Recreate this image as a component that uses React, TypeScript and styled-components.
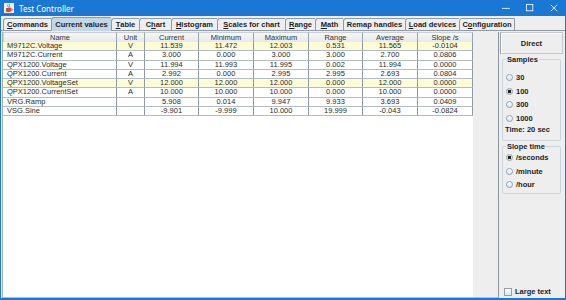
import React from "react";
import styled, { createGlobalStyle } from "styled-components";

const GlobalStyle = createGlobalStyle`
  html, body {
    margin: 0;
    padding: 0;
    background: #ffffff;
  }
  * {
    box-sizing: border-box;
  }
`;

type Tab = { label: string; mn?: number; width: number };

const tabs: Tab[] = [
  { label: "Commands", mn: 0, width: 48 },
  { label: "Current values", width: 60 },
  { label: "Table", mn: 0, width: 28 },
  { label: "Chart", mn: 1, width: 32 },
  { label: "Histogram", mn: 0, width: 46 },
  { label: "Scales for chart", mn: 0, width: 68 },
  { label: "Range", mn: 0, width: 30 },
  { label: "Math", mn: 0, width: 28 },
  { label: "Remap handles", width: 62 },
  { label: "Load devices", mn: 0, width: 54 },
  { label: "Configuration", mn: 1, width: 56 },
];

const columns = [
  { title: "Name", width: 114 },
  { title: "Unit", width: 28 },
  { title: "Current", width: 54 },
  { title: "Minimum", width: 55 },
  { title: "Maximum", width: 55 },
  { title: "Range", width: 54 },
  { title: "Average", width: 55 },
  { title: "Slope /s", width: 55 },
];

const gridCols = columns.map((c) => `${c.width}px`).join(" ");

type Row = { cells: string[]; hl?: boolean };

const rows: Row[] = [
  { cells: ["M9712C.Voltage", "V", "11.539", "11.472", "12.003", "0.531", "11.565", "-0.0104"], hl: true },
  { cells: ["M9712C.Current", "A", "3.000", "0.000", "3.000", "3.000", "2.700", "0.0806"] },
  { cells: ["QPX1200.Voltage", "V", "11.994", "11.993", "11.995", "0.002", "11.994", "0.0000"] },
  { cells: ["QPX1200.Current", "A", "2.992", "0.000", "2.995", "2.995", "2.693", "0.0804"] },
  { cells: ["QPX1200.VoltageSet", "V", "12.000", "12.000", "12.000", "0.000", "12.000", "0.0000"], hl: true },
  { cells: ["QPX1200.CurrentSet", "A", "10.000", "10.000", "10.000", "0.000", "10.000", "0.0000"] },
  { cells: ["VRG.Ramp", "", "5.908", "0.014", "9.947", "9.933", "3.693", "0.0409"] },
  { cells: ["VSG.Sine", "", "-9.901", "-9.999", "10.000", "19.999", "-0.043", "-0.0824"] },
];

const App: React.FC = () => {
  return (
    <>
      <GlobalStyle />
      <Window>
        <TitleBar>
          <TitleLeft>
            <svg width="10" height="10" viewBox="0 0 10 10">
              <rect x="0" y="0" width="10" height="10" fill="#e9eef5" />
              <path d="M2 5 h5 v3 a1 1 0 0 1 -1 1 h-3 a1 1 0 0 1 -1 -1 z" fill="#d24b2a" />
              <path d="M7 5.8 h1 a0.8 0.8 0 0 1 0 1.6 h-1" fill="none" stroke="#d24b2a" strokeWidth="0.7" />
              <path d="M4 1.5 q-1 1 0 2 q1 1 0 2" fill="none" stroke="#4a6fa8" strokeWidth="0.7" />
              <path d="M5.6 1.2 q-1 1 0 2 q1 1 0 2" fill="none" stroke="#4a6fa8" strokeWidth="0.7" />
            </svg>
            <TitleText>Test Controller</TitleText>
          </TitleLeft>
          <WinControls>
            <WinButton>
              <svg width="10" height="10" viewBox="0 0 10 10">
                <path d="M0 5.5 H10" stroke="#fff" strokeWidth="1" />
              </svg>
            </WinButton>
            <WinButton>
              <svg width="10" height="10" viewBox="0 0 10 10">
                <rect x="0.5" y="0.5" width="8" height="8" fill="none" stroke="#fff" strokeWidth="1" />
              </svg>
            </WinButton>
            <WinButton>
              <svg width="10" height="10" viewBox="0 0 10 10">
                <path d="M1 1 L9 9 M9 1 L1 9" stroke="#fff" strokeWidth="1" />
              </svg>
            </WinButton>
          </WinControls>
        </TitleBar>

        <TabStrip>
          {tabs.map((t, i) => (
            <TabButton key={t.label} $w={t.width} $active={i === 1}>
              {t.mn === undefined ? (
                t.label
              ) : (
                <>
                  {t.label.slice(0, t.mn)}
                  <u>{t.label[t.mn]}</u>
                  {t.label.slice(t.mn + 1)}
                </>
              )}
            </TabButton>
          ))}
        </TabStrip>

        <Content>
          <ScrollPane>
            <Viewport>
              <HeaderRow>
                {columns.map((c) => (
                  <HeaderCell key={c.title}>{c.title}</HeaderCell>
                ))}
              </HeaderRow>
              {rows.map((r) => (
                <DataRow key={r.cells[0]} $hl={r.hl}>
                  {r.cells.map((v, j) => (
                    <Cell key={j} $left={j === 0}>
                      {v}
                    </Cell>
                  ))}
                </DataRow>
              ))}
            </Viewport>
            <Filler />
          </ScrollPane>

          <SidePanel>
            <DirectButton>Direct</DirectButton>
            <Group $h={82} $pad={13}>
              <Legend>Samples</Legend>
              <RadioList>
                {["30", "100", "300", "1000"].map((s) => (
                  <RadioRow key={s}>
                    <Radio $on={s === "100"} />
                    {s}
                  </RadioRow>
                ))}
              </RadioList>
              <TimeText>Time: 20 sec</TimeText>
            </Group>
            <Group $h={48} $pad={6}>
              <Legend>Slope time</Legend>
              <RadioList>
                {["/seconds", "/minute", "/hour"].map((s) => (
                  <RadioRow key={s}>
                    <Radio $on={s === "/seconds"} />
                    {s}
                  </RadioRow>
                ))}
              </RadioList>
            </Group>
            <Spacer />
            <CheckRow>
              <CheckBox />
              Large text
            </CheckRow>
          </SidePanel>
        </Content>
      </Window>
    </>
  );
};

const Window = styled.div`
  width: 566px;
  height: 300px;
  display: flex;
  flex-direction: column;
  background: #eeeeee;
  border: 1px solid #1a78d4;
  border-top: none;
  border-bottom-width: 2px;
  font-family: "Liberation Sans", Arial, sans-serif;
  color: #222222;
  overflow: hidden;
`;

const TitleBar = styled.div`
  height: 16px;
  flex: none;
  background: #1a78d4;
  display: flex;
  align-items: center;
  justify-content: space-between;
  padding-left: 4px;
  margin: 0 -1px;
`;

const TitleLeft = styled.div`
  display: flex;
  align-items: center;
  gap: 5px;
`;

const TitleText = styled.span`
  color: #ffffff;
  font-size: 8px;
  font-family: "Noto Sans", "Liberation Sans", sans-serif;
`;

const WinControls = styled.div`
  display: flex;
  height: 100%;
`;

const WinButton = styled.div`
  width: 24px;
  height: 100%;
  display: flex;
  align-items: center;
  justify-content: center;
  svg {
    width: 8px;
    height: 8px;
  }
`;

const TabStrip = styled.div`
  height: 15px;
  flex: none;
  display: flex;
  align-items: flex-end;
  padding-left: 2px;
  border-bottom: 1px solid #8e9aa6;
`;

const TabButton = styled.div<{ $w: number; $active?: boolean }>`
  width: ${({ $w }) => $w}px;
  height: ${({ $active }) => ($active ? 14 : 13)}px;
  margin-bottom: -1px;
  display: flex;
  align-items: center;
  justify-content: center;
  font-size: 7.5px;
  font-weight: bold;
  white-space: nowrap;
  color: #1d1d1d;
  background: ${({ $active }) => ($active ? "#c2d6ea" : "#eeeeee")};
  border: 1px solid #8e9aa6;
  border-bottom: ${({ $active }) => ($active ? "1px solid #c2d6ea" : "1px solid #8e9aa6")};
  border-right: none;
  border-top-left-radius: 3px;
  &:last-child {
    border-right: 1px solid #8e9aa6;
  }
  u {
    text-decoration-thickness: 1px;
    text-underline-offset: 1px;
  }
`;

const Content = styled.div`
  flex: 1;
  display: flex;
  min-height: 0;
  padding: 1px 2px 0 1px;
`;

const ScrollPane = styled.div`
  width: 497px;
  display: flex;
  border-left: 1px solid #a8b0b8;
  border-bottom: 1px solid #b8bec4;
  border-right: 1px solid #8a949e;
`;

const Viewport = styled.div`
  width: 470px;
  background: #ffffff;
  display: flex;
  flex-direction: column;
`;

const Filler = styled.div`
  flex: 1;
  background: #eeeeee;
`;

const HeaderRow = styled.div`
  display: grid;
  grid-template-columns: ${gridCols};
  height: 10px;
`;

const HeaderCell = styled.div`
  font-size: 7.5px;
  line-height: 9px;
  text-align: center;
  color: #333333;
  background: linear-gradient(#f6f6f6, #e6e8ea);
  border-right: 1px solid #9ba5b0;
  border-bottom: 1px solid #9ba5b0;
  border-top: 1px solid #c9cfd5;
  &:first-child {
    border-left: 1px solid #c9cfd5;
  }
`;

const DataRow = styled.div<{ $hl?: boolean }>`
  display: grid;
  grid-template-columns: ${gridCols};
  height: 9.3px;
  background: ${({ $hl }) => ($hl ? "#fefcd6" : "#ffffff")};
`;

const Cell = styled.div<{ $left?: boolean }>`
  font-size: 7.5px;
  line-height: 8.3px;
  color: #2a2a2a;
  text-align: ${({ $left }) => ($left ? "left" : "center")};
  padding-left: ${({ $left }) => ($left ? 4 : 0)}px;
  border-right: 1px solid #8d99a6;
  border-bottom: 1px solid #b3bcc5;
  white-space: nowrap;
  overflow: hidden;
`;

const SidePanel = styled.div`
  flex: 1;
  display: flex;
  flex-direction: column;
  padding: 0 0 2px 1px;
`;

const DirectButton = styled.div`
  height: 22px;
  display: flex;
  align-items: center;
  justify-content: center;
  font-size: 7.5px;
  font-weight: bold;
  color: #1d1d1d;
  border: 1px solid #c4c8cc;
  border-left-color: #9aa2aa;
  background: #eeeeee;
  box-shadow: inset 1px 1px 0 #ffffff;
`;

const Group = styled.div<{ $h: number; $pad: number }>`
  position: relative;
  height: ${({ $h }) => $h}px;
  margin: 5px 2px 0 2px;
  border: 1px solid #ccd6df;
  border-radius: 2px;
  padding: ${({ $pad }) => $pad}px 0 0 3px;
`;

const Legend = styled.div`
  position: absolute;
  top: -5px;
  left: 3px;
  padding: 0 1px;
  background: #eeeeee;
  font-size: 7.5px;
  line-height: 9px;
  font-weight: bold;
  color: #1d1d1d;
`;

const RadioList = styled.div`
  display: flex;
  flex-direction: column;
  gap: 4.6px;
`;

const RadioRow = styled.div`
  display: flex;
  align-items: center;
  gap: 3px;
  height: 9px;
  font-size: 7.5px;
  font-weight: bold;
  color: #1d1d1d;
`;

const Radio = styled.span<{ $on?: boolean }>`
  width: 7px;
  height: 7px;
  border-radius: 50%;
  border: 1px solid #8ea0b2;
  background: ${({ $on }) =>
    $on
      ? "radial-gradient(circle, #222 0 1.6px, #dfe6ee 2px)"
      : "linear-gradient(#ffffff, #dde5ee)"};
`;

const TimeText = styled.div`
  font-size: 7.5px;
  font-weight: bold;
  color: #1d1d1d;
  margin-top: 2px;
  margin-left: -1px;
`;

const Spacer = styled.div`
  flex: 1;
`;

const CheckRow = styled.div`
  display: flex;
  align-items: center;
  gap: 3px;
  padding-left: 4px;
  font-size: 7.5px;
  font-weight: bold;
  color: #1d1d1d;
`;

const CheckBox = styled.span`
  width: 8px;
  height: 8px;
  border: 1px solid #8ea0b2;
  background: linear-gradient(#ffffff, #dde5ee);
`;

export default App;
